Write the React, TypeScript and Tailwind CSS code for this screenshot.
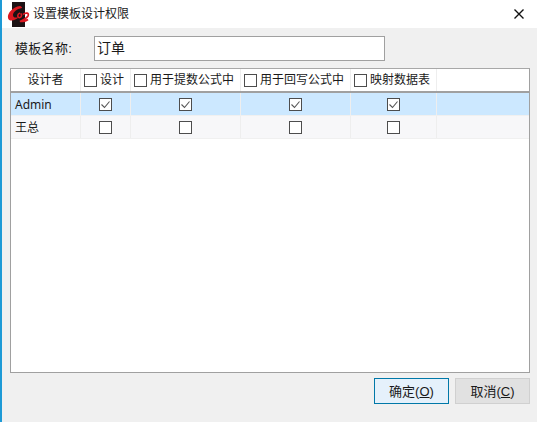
const columns = [
  { label: "设计", width: "w-[50px]" },
  { label: "用于提数公式中", width: "w-[110px]" },
  { label: "用于回写公式中", width: "w-[110px]" },
  { label: "映射数据表", width: "w-[86px]" },
];

const rows = [
  { name: "Admin", checked: true },
  { name: "王总", checked: false },
];

function Box({ checked = false }: { checked?: boolean }) {
  return (
    <span className="flex h-[13px] w-[13px] shrink-0 items-center justify-center border border-[#4d4d4d] bg-white">
      {checked && (
        <svg width="11" height="11" viewBox="0 0 11 11" fill="none">
          <path d="M1.5 5.5L4.5 8.5L9.5 2.5" stroke="#555555" strokeWidth="1.1" />
        </svg>
      )}
    </span>
  );
}

function Logo() {
  return (
    <svg width="24" height="25" viewBox="0 0 24 25" className="shrink-0">
      <rect x="5" y="0" width="13" height="25" fill="#1c1214" />
      <path
        d="M13 4C6 5 0 11 1 16C2 20 8 19 12 15C9 16 6 16 6 13C6 10 10 7 15 6C15 5 14 4 13 4Z"
        fill="#dc1820"
      />
      <path
        d="M13 11C10 12 10 16 13 15.5C15 15 15 12 13.5 11.5M16 12.5C19 10 22.5 11 21 14C19.5 16.5 16 18 13 19.5C16 19.5 19 19 21 17.5"
        fill="none"
        stroke="#dc1820"
        strokeWidth="1.7"
      />
    </svg>
  );
}

function Row({ name, checked, selected }: { name: string; checked: boolean; selected: boolean }) {
  return (
    <div
      className={`flex h-[23px] border-b border-[#f0f0f0] ${
        selected ? "bg-[#cce8ff]" : "bg-[#f7f7f9]"
      }`}
    >
      <div className="flex w-[70px] items-center border-r border-[#eeeeee] pl-[4px] pt-[1px] font-['Noto_Sans','Noto_Sans_CJK_SC',sans-serif] text-[12px] text-[#1a1a1a]">
        {name}
      </div>
      {columns.map((c) => (
        <div
          key={c.label}
          className={`flex ${c.width} items-center justify-center border-r border-[#eeeeee]`}
        >
          <Box checked={checked} />
        </div>
      ))}
      <div className="flex-1" />
    </div>
  );
}

export default function App() {
  return (
    <div className="flex h-[422px] w-[537px] flex-col overflow-hidden border-l-2 border-[#1e9ad6] bg-[#f0f0f0] font-['Liberation_Sans','Noto_Sans_CJK_SC',sans-serif] text-[#1a1a1a]">
      <div className="flex h-[28px] items-center bg-white pl-[5px] pr-[13px]">
        <Logo />
        <span className="ml-[2px] flex-1 text-[12px]">设置模板设计权限</span>
        <svg width="10" height="10" viewBox="0 0 10 10" fill="none">
          <path d="M0.5 0.5L9.5 9.5M9.5 0.5L0.5 9.5" stroke="#111111" strokeWidth="1.4" />
        </svg>
      </div>

      <div className="flex flex-1 flex-col pl-[8px] pr-[7px]">
        <div className="mt-[8px] flex h-[25px] items-center pl-[5px]">
          <span className="w-[79px] pt-[1px] text-[13px] tracking-[0.3px]">模板名称:</span>
          <div className="flex h-[25px] w-[291px] items-center border border-[#a0a0a0] bg-white pl-[2px] text-[14px]">
            订单
          </div>
        </div>

        <div className="mt-[7px] h-[305px] border border-[#a0a0a0] border-t-[#a8a8a8] bg-white">
          <div className="flex h-[24px] border-b-2 border-[#a0a0a0] bg-white text-[12px]">
            <div className="flex w-[70px] items-center justify-center border-r border-[#eeeeee]">
              设计者
            </div>
            {columns.map((c) => (
              <div
                key={c.label}
                className={`flex ${c.width} items-center gap-[3px] border-r border-[#eeeeee] pl-[3px]`}
              >
                <Box />
                <span className="whitespace-nowrap">{c.label}</span>
              </div>
            ))}
            <div className="flex-1" />
          </div>
          {rows.map((r, i) => (
            <Row key={r.name} name={r.name} checked={r.checked} selected={i === 0} />
          ))}
        </div>

        <div className="mt-[5px] flex justify-end gap-[6px] text-[13px]">
          <button className="h-[26px] w-[75px] border border-[#0078a8] bg-[#e5f1fb] pt-[2px]">
            确定(<span className="underline">O</span>)
          </button>
          <button className="h-[26px] w-[75px] border border-[#d0d0d0] bg-[#e1e1e1] pt-[2px]">
            取消(<span className="underline">C</span>)
          </button>
        </div>
      </div>
    </div>
  );
}
